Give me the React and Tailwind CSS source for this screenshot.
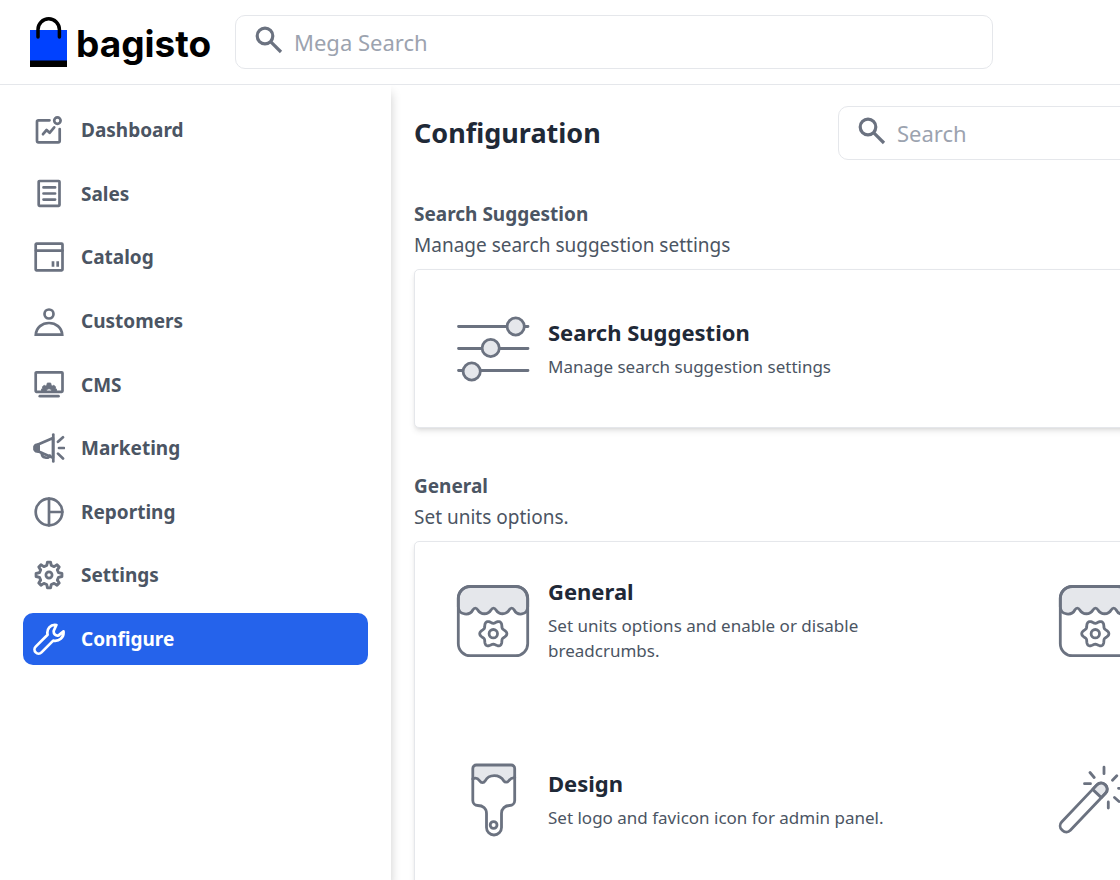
import React from 'react'

const gearPath = (cx, cy, outer, inner, teeth) => {
  const step = (Math.PI * 2) / teeth
  const points = []
  for (let i = 0; i < teeth; i++) {
    const a = i * step - Math.PI / 2
    const corners = [
      [inner, -0.3],
      [outer, -0.15],
      [outer, 0.15],
      [inner, 0.3],
    ]
    corners.forEach(([r, t]) => {
      points.push(`${(cx + r * Math.cos(a + t * step)).toFixed(2)} ${(cy + r * Math.sin(a + t * step)).toFixed(2)}`)
    })
  }
  return `M${points.join('L')}Z`
}

const flowerPath = (cx, cy, radius, wave) => {
  const points = []
  for (let i = 0; i < 72; i++) {
    const a = (i * Math.PI) / 36
    const r = radius + wave * Math.cos(6 * a)
    points.push(`${(cx + r * Math.cos(a)).toFixed(2)} ${(cy + r * Math.sin(a)).toFixed(2)}`)
  }
  return `M${points.join('L')}Z`
}

function NavIcon({ children }) {
  return (
    <svg
      className="size-8 shrink-0"
      viewBox="0 0 32 32"
      fill="none"
      stroke="currentColor"
      strokeWidth="2.7"
      strokeLinecap="round"
      strokeLinejoin="round"
      aria-hidden="true"
    >
      {children}
    </svg>
  )
}

function CardIcon({ children }) {
  return (
    <svg
      className="size-[72px] shrink-0 overflow-visible text-[#6b7280]"
      viewBox="0 0 72 72"
      fill="none"
      stroke="currentColor"
      strokeWidth="2.8"
      strokeLinecap="round"
      strokeLinejoin="round"
      aria-hidden="true"
    >
      {children}
    </svg>
  )
}

const navItems = [
  {
    name: 'Dashboard',
    icon: (
      <>
        <path d="M16.500 6.300H5.500a1.500 1.500 0 0 0-1.500 1.500v19a1.500 1.500 0 0 0 1.500 1.500h19.700a1.500 1.500 0 0 0 1.500-1.500V15" />
        <circle cx="24.400" cy="6.600" r="3.200" />
        <path d="M10 20.200l3.600-4.200 3 2.800 4.600-5.400" />
      </>
    ),
  },
  {
    name: 'Sales',
    icon: (
      <>
        <rect x="5.700" y="3" width="20.800" height="24.800" rx="0.8" />
        <path d="M10.500 9.400h11.600M10.500 15.500h11.600M10.500 21.600h11.600" />
      </>
    ),
  },
  {
    name: 'Catalog',
    icon: (
      <>
        <rect x="2.700" y="2.600" width="26.800" height="26.800" rx="0.8" />
        <path d="M3 9.600h26.500" />
        <path d="M20 20.300v5.500M24.700 20.300v5.500" strokeLinecap="butt" />
      </>
    ),
  },
  {
    name: 'Customers',
    icon: (
      <>
        <circle cx="16" cy="9" r="4.500" />
        <path d="M2.800 29.600C3.400 22.400 9 18 16 18s12.600 4.400 13.200 11.600Z" strokeLinejoin="miter" />
      </>
    ),
  },
  {
    name: 'CMS',
    icon: (
      <>
        <rect x="2.700" y="3.300" width="26.800" height="19.500" rx="0.8" />
        <path d="M6.800 27.200h18.700" />
        <path
          d="M8.500 22v-2l1.200-.8-.3-1.400 1.800-1.500 1.500.6 1.200-.9.400-2h3.400l.4 2 1.200.9 1.500-.6 1.800 1.500-.3 1.400 1.200.8v2h-4.600a3 3 0 0 0-5.800 0Z"
          fill="currentColor"
          strokeWidth="0.8"
        />
      </>
    ),
  },
  {
    name: 'Marketing',
    icon: (
      <>
        <path d="M5.600 12.300L20 6v19.800L5.600 19.600Z" />
        <path d="M5.600 12.300L2.600 13 1.500 14.500v3l1.100 1.600 3 .6Z" fill="currentColor" />
        <path d="M20.300 2.600v26.800" />
        <path d="M8.800 21.200c-.2 4.800 6.800 6 8 2.400" />
        <path d="M25 9.800l5-4.500M26 16h5M25 21.600l5 4.900" />
      </>
    ),
  },
  {
    name: 'Reporting',
    icon: (
      <>
        <circle cx="16" cy="16" r="13.300" />
        <path d="M16 2.700v26.600M16 16h13.300" />
      </>
    ),
  },
  {
    name: 'Settings',
    icon: (
      <>
        <path d={gearPath(16, 16, 13, 9.8, 8)} strokeWidth="2.9" />
        <circle cx="16" cy="16" r="3.100" />
      </>
    ),
  },
  {
    name: 'Configure',
    active: true,
    icon: (
      <path d="M23.400 2C17.500 1 13.300 5.800 14.600 11.800L2.700 23.600a4.100 4.100 0 0 0 5.800 5.800L20.200 17.600c5.800 1.200 11-3.200 10.300-9.200L25.600 12.400c-3 .8-5.400-1.600-4.800-4.800Z" />
    ),
  },
]

const shopIcon = (
  <CardIcon>
    <path
      d="M1.300 22V13.500A12 12 0 0 1 13.300 1.500h45.400a12 12 0 0 1 12 12V22c-.5 8.500-10.500 9-13.500 3-1.500-2.500-3.500-2.500-5 0-3 5-10.200 5-13.200 0-1.500-2.500-3.500-2.500-5 0-3 5-10.200 5-13.200 0-1.500-2.500-3.500-2.500-5 0-3 6-14 5.500-14.500-3Z"
      fill="#e5e7eb"
    />
    <rect x="1.300" y="1.300" width="69.400" height="69.400" rx="12" />
    <path d={flowerPath(36.3, 48.7, 12, 1.6)} />
    <circle cx="36.300" cy="48.700" r="4.200" />
  </CardIcon>
)

const slidersIcon = (
  <CardIcon>
    <path d="M1.500 13.500h69.500M1.500 35.500h69.500M1.500 57.500h69.500" />
    <g fill="#e5e7eb">
      <circle cx="58.700" cy="13.500" r="8.600" />
      <circle cx="33.700" cy="35" r="8.600" />
      <circle cx="14.700" cy="58.500" r="8.600" />
    </g>
  </CardIcon>
)

const brushIcon = (
  <CardIcon>
    <path
      d="M15.800 15V4.500a3.500 3.500 0 0 1 3.500-3.500h34.900a3.500 3.500 0 0 1 3.500 3.500V14c-3-1-4.500 1-6 2.800-1.500 1.800-3.600 1.800-5 0-4-7-15-7-18.500 0-1.500 2.500-4 2.500-5.500 0-2-2.600-4-3.600-6.900-1.800Z"
      fill="#e5e7eb"
    />
    <path d="M15.800 15v21.500a5 5 0 0 0 5 5c5 0 8.700 3 8.700 8V63.500a7.500 7.500 0 0 0 15 0V49.500c0-5 3.700-8 8.200-8a5 5 0 0 0 5-5V13" />
    <circle cx="36.600" cy="61" r="3.400" />
  </CardIcon>
)

const wandIcon = (
  <CardIcon>
    <g transform="rotate(-46.500 24.700 43.500)">
      <path d="M44 37.500h6a6 6 0 0 1 6 6 6 6 0 0 1-6 6h-6Z" fill="#e5e7eb" />
      <rect x="-6.500" y="37.500" width="62.500" height="12" rx="5.500" />
    </g>
    <path d="M45 3.200v6.500M31 8.500l4.200 5M25.500 19.700h6M53.500 16.200l4.300-4.500M59.500 24.300h6.500M55.500 33.500l4.500 4M49.300 38v6" />
  </CardIcon>
)

const sections = [
  {
    title: 'Search Suggestion',
    info: 'Manage search suggestion settings',
    items: [
      {
        title: 'Search Suggestion',
        info: 'Manage search suggestion settings',
        icon: slidersIcon,
      },
    ],
  },
  {
    title: 'General',
    info: 'Set units options.',
    items: [
      {
        title: 'General',
        info: 'Set units options and enable or disable breadcrumbs.',
        icon: shopIcon,
      },
      { icon: shopIcon },
      {
        title: 'Design',
        info: 'Set logo and favicon icon for admin panel.',
        icon: brushIcon,
      },
      { icon: wandIcon },
    ],
  },
]

function SearchBox({ label, className }) {
  return (
    <label className={`flex h-[54px] items-center gap-[11px] rounded-[10px] border border-[#e5e7eb] bg-white px-[19px] ${className}`}>
      <svg
        className="mb-1 size-7 shrink-0 text-[#6b7280]"
        viewBox="0 0 28 28"
        fill="none"
        stroke="currentColor"
        strokeWidth="3.200"
        aria-hidden="true"
      >
        <circle cx="10" cy="10" r="7.800" />
        <path d="M15.600 15.600l10.400 10.400" />
      </svg>
      <input
        type="text"
        aria-label={label}
        placeholder={label}
        className="min-w-0 flex-1 bg-transparent text-[22px] leading-8 outline-none placeholder:text-[#9ca3af]"
      />
    </label>
  )
}

function Header() {
  return (
    <header className="flex h-[85px] items-center gap-6 border-b border-[#e5e7eb] bg-white pl-[30px]">
      <a href="#" className="flex w-[181px] shrink-0 items-center gap-[9px] text-black">
        <svg className="h-[50px] w-[37px] shrink-0" viewBox="0 0 37 50" fill="none" aria-hidden="true">
          <path d="M0 13h37v31H0z" fill="#0041ff" />
          <path d="M0 43.500h37v6.500H0z" fill="#000" />
          <path d="M8 20V12.500a10.700 10.700 0 0 1 21.400 0V20" stroke="#000" strokeWidth="3.500" strokeLinecap="round" />
        </svg>
        <span className="pt-1 font-[Inter] text-[37px] leading-[46px] font-bold">bagisto</span>
      </a>
      <SearchBox label="Mega Search" className="mr-[127px] flex-1" />
    </header>
  )
}

function Sidebar() {
  return (
    <aside className="z-10 w-[391px] shrink-0 bg-white px-[23px] pt-[19px] shadow-[0_8px_10px_rgba(0,0,0,0.2)]">
      <nav className="flex h-[561px] flex-col justify-between">
        {navItems.map((item) => (
          <a
            key={item.name}
            href="#"
            className={`flex h-[52px] items-center gap-4 rounded-[10px] px-[10px] ${
              item.active ? 'bg-[#2563eb] text-white' : 'text-[#6b7280]'
            }`}
          >
            <NavIcon>{item.icon}</NavIcon>
            <span className={`text-[19px] leading-8 font-bold ${item.active ? 'text-white' : 'text-[#4b5563]'}`}>
              {item.name}
            </span>
          </a>
        ))}
      </nav>
    </aside>
  )
}

function ConfigItem({ item }) {
  return (
    <a href="#" className="flex min-h-[89px] items-center gap-[19px]">
      {item.icon}
      {item.title && (
        <div className="max-w-[350px] pb-[2px]">
          <h3 className="mb-[7px] text-[22px] leading-[30px] font-bold text-[#1f2937]">{item.title}</h3>
          <p className="text-[17px] leading-[25px] text-[#4b5563]">{item.info}</p>
        </div>
      )}
    </a>
  )
}

function ConfigSection({ section }) {
  return (
    <section>
      <h2 className="text-[19px] leading-[31px] font-bold text-[#4b5563]">{section.title}</h2>
      <p className="text-[19px] leading-[31px] text-[#4b5563]">{section.info}</p>
      <div
        className={`mt-2 grid grid-cols-[602px_602px] gap-y-[90px] rounded-[5px] border border-[#e5e7eb] bg-white px-[42px] pt-[34px] shadow-md ${
          section.items.length > 1 ? 'pb-20' : 'pb-[34px]'
        }`}
      >
        {section.items.map((item, i) => (
          <ConfigItem key={i} item={item} />
        ))}
      </div>
    </section>
  )
}

export default function App() {
  return (
    <div className="flex h-screen flex-col overflow-hidden bg-white font-['Noto_Sans',sans-serif]">
      <Header />
      <div className="flex min-h-0 flex-1 overflow-hidden">
        <Sidebar />
        <main className="min-w-[1300px] flex-1 px-[23px] pt-[21px]">
          <div className="mb-[39px] flex items-center">
            <h1 className="w-[424px] text-[27px] leading-10 font-bold text-[#1f2937]">Configuration</h1>
            <SearchBox label="Search" className="flex-1" />
          </div>
          <div className="flex flex-col gap-[43px]">
            {sections.map((section) => (
              <ConfigSection key={section.title} section={section} />
            ))}
          </div>
        </main>
      </div>
    </div>
  )
}
